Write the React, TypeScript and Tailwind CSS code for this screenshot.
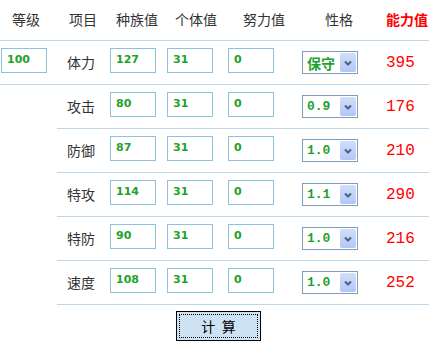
const rows = [
  { name: "体力", base: "127", nature: "保守", stat: "395" },
  { name: "攻击", base: "80", nature: "0.9", stat: "176" },
  { name: "防御", base: "87", nature: "1.0", stat: "210" },
  { name: "特攻", base: "114", nature: "1.1", stat: "290" },
  { name: "特防", base: "90", nature: "1.0", stat: "216" },
  { name: "速度", base: "108", nature: "1.0", stat: "252" },
];

const cjk = "font-['Noto_Sans_CJK_SC',sans-serif]";

function NumBox({ value }: { value: string }) {
  return (
    <div className="mt-[7px] flex h-[25px] w-[46px] items-center border border-[#8ec3dd] bg-white pl-[5px] pb-[1px] font-['DejaVu_Sans',sans-serif] text-[11px] font-bold text-[#1fa12e]">
      {value}
    </div>
  );
}

function NatureSelect({ value }: { value: string }) {
  const isText = value === "保守";
  return (
    <div className="mt-[10px] flex h-[23px] w-[56px] items-center justify-between border border-[#7f9db9] bg-white pl-[4px] pr-[1px]">
      <span
        className={
          isText
            ? `${cjk} text-[14px] font-bold leading-none text-[#1fa12e]`
            : "font-['Liberation_Mono',monospace] text-[13px] font-bold leading-none text-[#1fa12e]"
        }
      >
        {value}
      </span>
      <span className="flex h-[19px] w-[16px] items-center justify-center rounded-[2px] bg-gradient-to-b from-[#d2defb] to-[#b3c7f5]">
        <svg width="8" height="6" viewBox="0 0 8 6">
          <path d="M1 1.5 L4 4.5 L7 1.5" stroke="#4d6185" strokeWidth="2" fill="none" />
        </svg>
      </span>
    </div>
  );
}

export default function App() {
  return (
    <div className={`w-[429px] bg-white ${cjk} text-[14px] text-[#333]`}>
      <div className="flex h-[40px] items-center pb-[2px]">
        <span className="absolute-none ml-[12px]">等级</span>
        <span className="ml-[29px]">项目</span>
        <span className="ml-[19px]">种族值</span>
        <span className="ml-[17px]">个体值</span>
        <span className="ml-[26px]">努力值</span>
        <span className="ml-[40px]">性格</span>
        <span className="ml-[33px] font-bold text-[#ff0000]">能力值</span>
      </div>

      {rows.map((r, i) => (
        <div key={r.name} className={`flex h-[44px] ${i < 2 ? "border-t border-[#bcd6ea]" : ""}`}>
          <div className="w-[57px] pl-[1px]">
            {i === 0 && <NumBox value="100" />}
          </div>
          <div className={`flex flex-1 ${i >= 2 ? "border-t border-[#bcd6ea]" : ""}`}>
            <div className="w-[47px] pl-[10px] pt-[10px] leading-[22px]">{r.name}</div>
            <div className="w-[57px] pl-[6px]">
              <NumBox value={r.base} />
            </div>
            <div className="w-[61px] pl-[6px]">
              <NumBox value="31" />
            </div>
            <div className="w-[74px] pl-[6px]">
              <NumBox value="0" />
            </div>
            <div className="w-[74px] pl-[6px]">
              <NatureSelect value={r.nature} />
            </div>
            <div className="flex-1 pt-[11px] pl-[16px] font-['Liberation_Mono',monospace] text-[16px] leading-[22px] text-[#ff0000]">
              {r.stat}
            </div>
          </div>
        </div>
      ))}

      <div className="ml-[57px] border-t border-[#bcd6ea]" />

      <div className="pt-[6px] pb-[5px]">
        <button className="ml-[176px] flex h-[30px] w-[85px] items-center justify-center border border-black bg-[#cde3f3] p-[2px]">
          <span className="flex h-full w-full items-center justify-center border border-dotted border-black text-[14px] text-black">
            计&nbsp;&nbsp;算
          </span>
        </button>
      </div>
    </div>
  );
}
